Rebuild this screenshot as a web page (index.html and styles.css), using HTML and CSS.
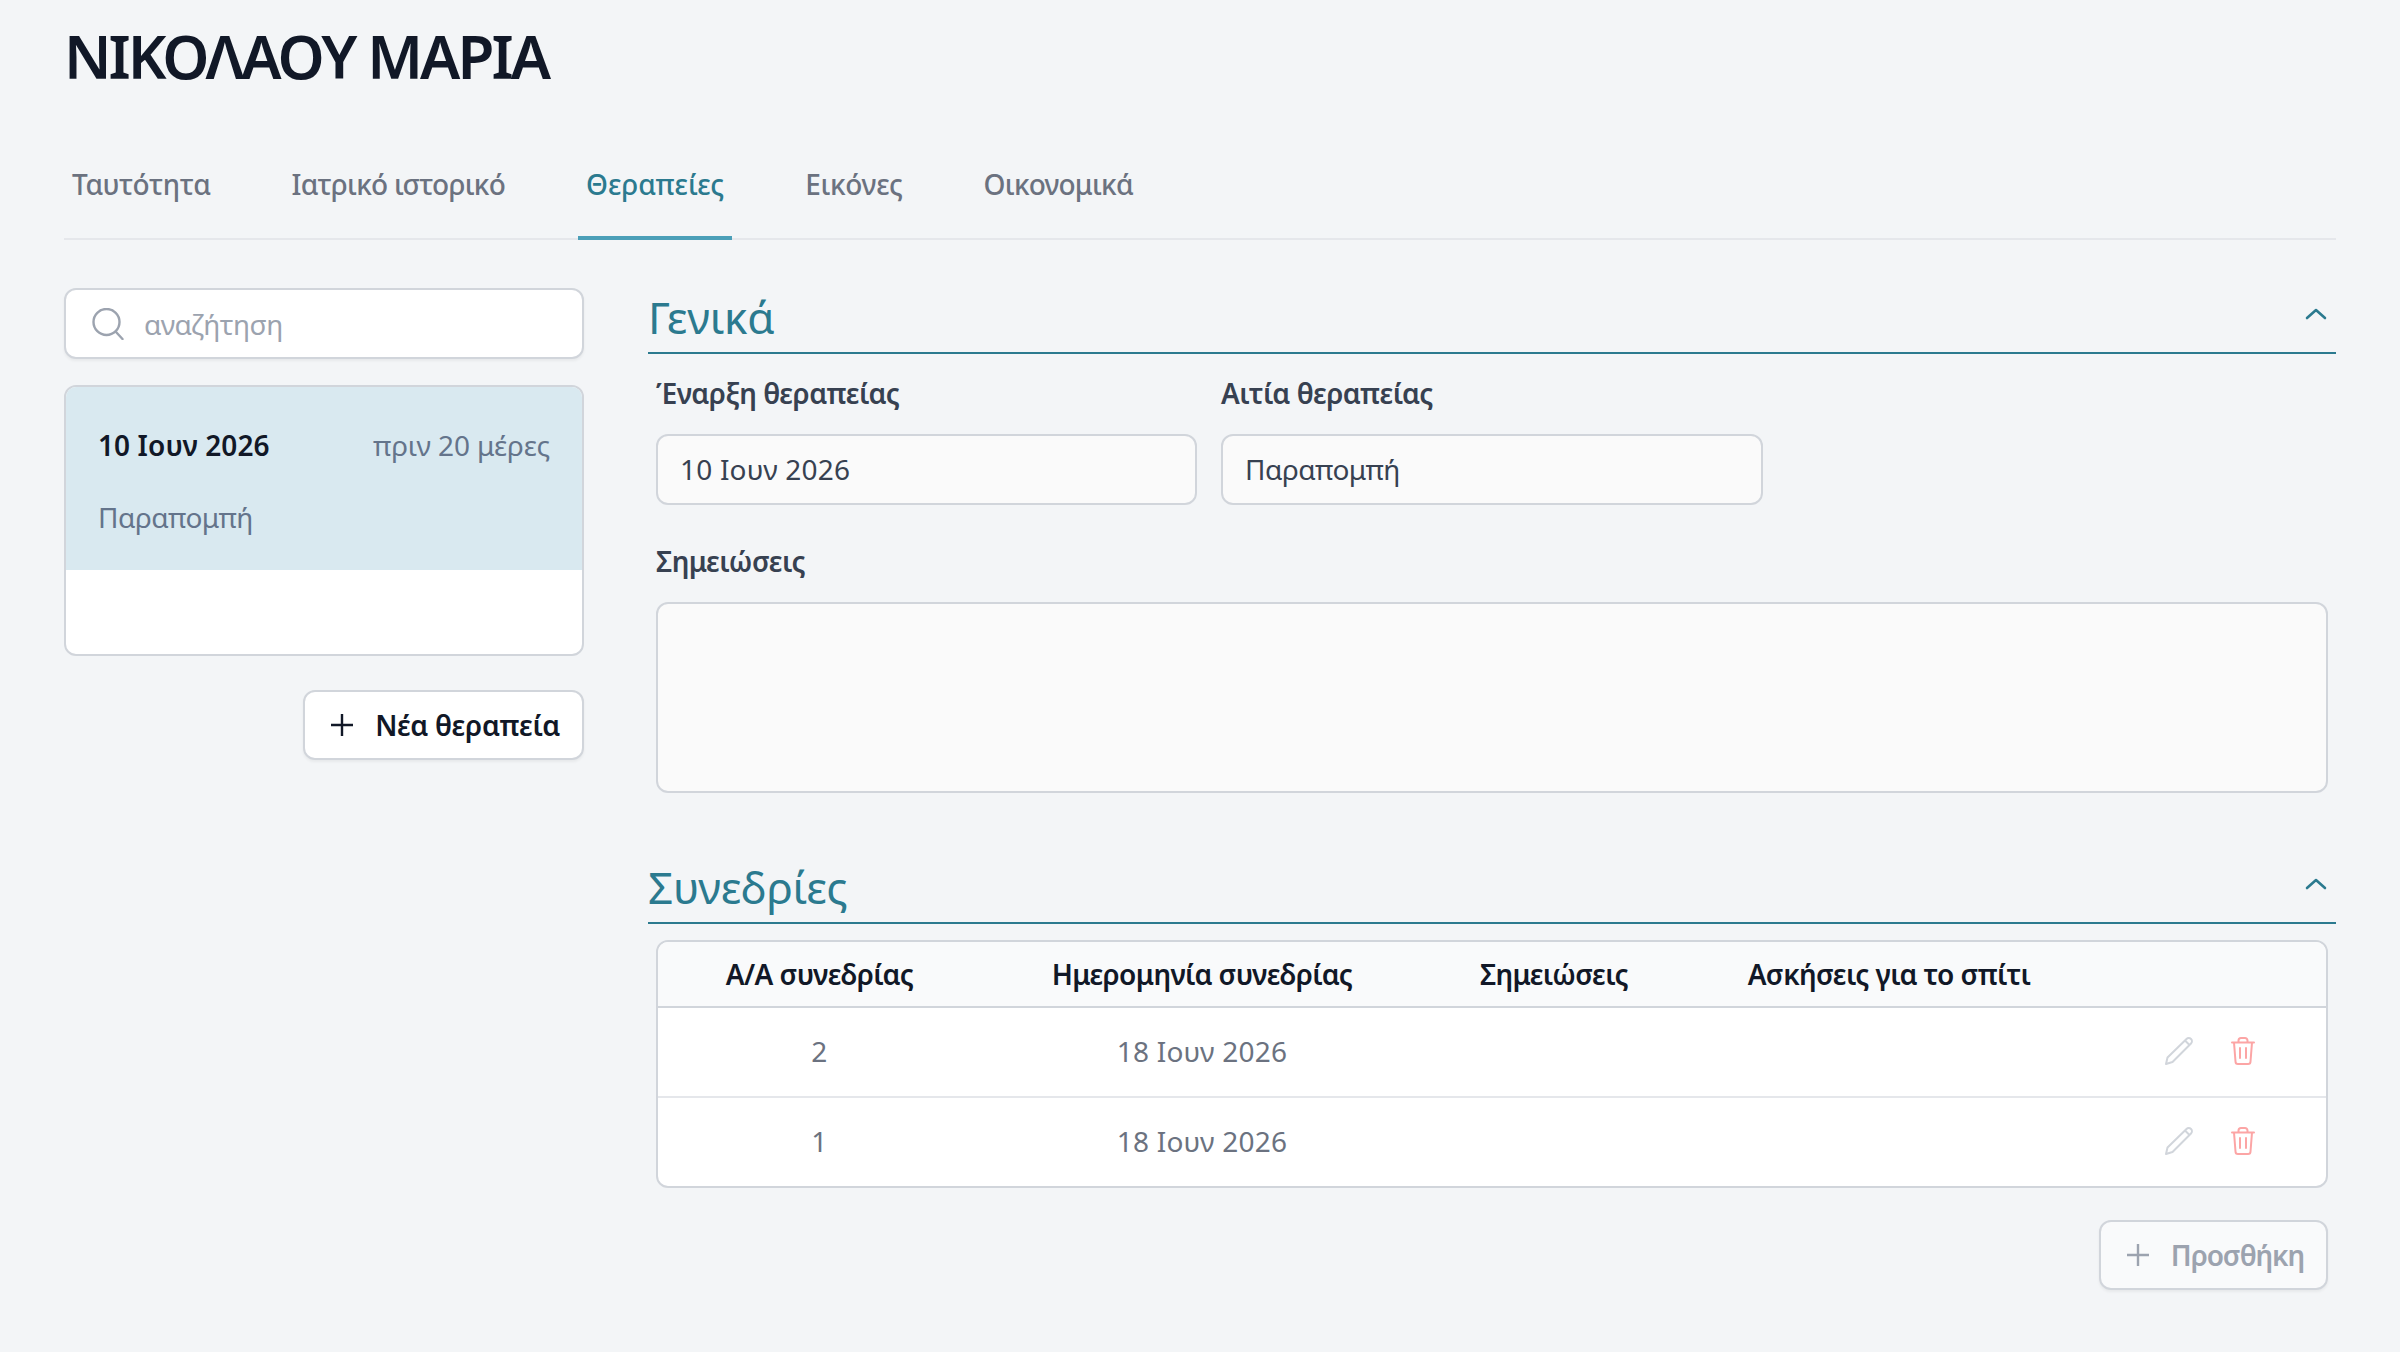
FILE: index.html
```html
<!DOCTYPE html>
<html lang="el">
<head>
<meta charset="utf-8">
<title>ΝΙΚΟΛΑΟΥ ΜΑΡΙΑ</title>
<link rel="stylesheet" href="styles.css">
</head>
<body>
<main class="page">
  <h1 class="title">ΝΙΚΟΛΑΟΥ ΜΑΡΙΑ</h1>
  <nav class="tabs">
    <a class="tab">Ταυτότητα</a>
    <a class="tab tight">Ιατρικό ιστορικό</a>
    <a class="tab active">Θεραπείες</a>
    <a class="tab">Εικόνες</a>
    <a class="tab tight">Οικονομικά</a>
  </nav>
  <div class="columns">
    <aside class="side">
      <div class="search">
        <svg class="search-icon" viewBox="0 0 32 32" fill="none" stroke="currentColor" stroke-width="2.4" stroke-linecap="round"><circle cx="14.500" cy="14" r="13"/><path d="M24 24l6.500 7"/></svg>
        <span class="search-text">αναζήτηση</span>
      </div>
      <div class="list">
        <div class="item">
          <div class="item-top"><strong class="item-date">10 Ιουν 2026</strong><span class="item-ago">πριν 20 μέρες</span></div>
          <div class="item-reason">Παραπομπή</div>
        </div>
      </div>
      <div class="side-actions">
        <button class="btn btn-dark">
          <svg class="plus" viewBox="0 0 24 24" fill="none" stroke="currentColor" stroke-width="2.4"><path d="M12 1v22M1 12h22"/></svg>
          Νέα θεραπεία
        </button>
      </div>
    </aside>
    <section class="content">
      <header class="sec-head">
        <h2 class="sec-title">Γενικά</h2>
        <svg class="chev" viewBox="0 0 22 12" fill="none" stroke="currentColor" stroke-width="2.600" stroke-linecap="round" stroke-linejoin="round"><path d="M2 10l9-8 9 8"/></svg>
      </header>
      <div class="form">
        <div class="form-row">
          <label class="field">
            <span class="label">Έναρξη θεραπείας</span>
            <input class="input date" value="10 Ιουν 2026" readonly>
          </label>
          <label class="field">
            <span class="label">Αιτία θεραπείας</span>
            <input class="input" value="Παραπομπή" readonly>
          </label>
        </div>
        <label class="field notes">
          <span class="label">Σημειώσεις</span>
          <textarea class="input area" readonly></textarea>
        </label>
      </div>

      <header class="sec-head second">
        <h2 class="sec-title">Συνεδρίες</h2>
        <svg class="chev" viewBox="0 0 22 12" fill="none" stroke="currentColor" stroke-width="2.600" stroke-linecap="round" stroke-linejoin="round"><path d="M2 10l9-8 9 8"/></svg>
      </header>
      <div class="table-wrap">
        <table class="table">
          <colgroup><col class="c1"><col class="c2"><col class="c3"><col class="c4"><col class="c5"></colgroup>
          <thead>
            <tr><th>Α/Α συνεδρίας</th><th>Ημερομηνία συνεδρίας</th><th>Σημειώσεις</th><th>Ασκήσεις για το σπίτι</th><th></th></tr>
          </thead>
          <tbody>
            <tr>
              <td>2</td><td>18 Ιουν 2026</td><td></td><td></td>
              <td><div class="actions">
                <svg class="ico-edit" viewBox="0 0 28 28" fill="none" stroke="currentColor" stroke-width="2" stroke-linejoin="round"><path d="M1 27l1.500-6.500L21.500 2a2.800 2.800 0 0 1 4.500 4.500L7.500 25z"/><path d="M20 3.500l4.500 4.500"/></svg>
                <svg class="ico-del" viewBox="0 0 24 28" fill="none" stroke="currentColor" stroke-width="2" stroke-linecap="round" stroke-linejoin="round"><path d="M1 5.500h22M7.500 5.500V3.500a2.500 2.500 0 0 1 2.500-2.500h4a2.500 2.500 0 0 1 2.500 2.500v2M3 5.500l1.500 19a2.500 2.500 0 0 0 2.500 2.500h10a2.500 2.500 0 0 0 2.500-2.500l1.500-19M9 11v10M15 11v10"/></svg>
              </div></td>
            </tr>
            <tr>
              <td>1</td><td>18 Ιουν 2026</td><td></td><td></td>
              <td><div class="actions">
                <svg class="ico-edit" viewBox="0 0 28 28" fill="none" stroke="currentColor" stroke-width="2" stroke-linejoin="round"><path d="M1 27l1.500-6.500L21.500 2a2.800 2.800 0 0 1 4.500 4.500L7.500 25z"/><path d="M20 3.500l4.500 4.500"/></svg>
                <svg class="ico-del" viewBox="0 0 24 28" fill="none" stroke="currentColor" stroke-width="2" stroke-linecap="round" stroke-linejoin="round"><path d="M1 5.500h22M7.500 5.500V3.500a2.500 2.500 0 0 1 2.500-2.500h4a2.500 2.500 0 0 1 2.500 2.500v2M3 5.500l1.500 19a2.500 2.500 0 0 0 2.500 2.500h10a2.500 2.500 0 0 0 2.500-2.500l1.500-19M9 11v10M15 11v10"/></svg>
              </div></td>
            </tr>
          </tbody>
        </table>
      </div>
      <div class="content-actions">
        <button class="btn btn-muted">
          <svg class="plus" viewBox="0 0 24 24" fill="none" stroke="currentColor" stroke-width="2.400"><path d="M12 1v22M1 12h22"/></svg>
          Προσθήκη
        </button>
      </div>
    </section>
  </div>
</main>
</body>
</html>
```
FILE: styles.css
```css
* { box-sizing: border-box; }
html, body { margin: 0; height: 100%; }
body {
  background: #f3f5f7;
  font-family: "Noto Sans", "Open Sans", sans-serif;
  color: #111827;
  overflow: hidden;
}
.page { padding: 17px 64px 0; }
.title {
  margin: 0;
  font-size: 60px;
  line-height: 78px;
  font-weight: 600;
  color: #111827;
  letter-spacing: -2.900px;
}
.tabs {
  display: flex;
  margin-top: 51px;
  height: 94px;
  border-bottom: 2px solid #e5e7eb;
  gap: 65px;
}
.tab {
  font-size: 28px;
  line-height: 40px;
  font-weight: 500;
  letter-spacing: -0.300px;
  color: #6b7280;
  padding: 18px 8px 0;
  height: 94px;
  white-space: nowrap;
}
.tab.tight { letter-spacing: -0.750px; }
.tab.active {
  color: #2b7a8f;
  letter-spacing: -0.050px;
  border-bottom: 4px solid #4b9fb8;
}
.columns {
  display: grid;
  grid-template-columns: 520px 1fr;
  column-gap: 64px;
  margin-top: 48px;
}
.search {
  height: 71px;
  background: #fff;
  border: 2px solid #d1d5db;
  border-radius: 12px;
  box-shadow: 0 2px 3px rgba(0,0,0,.05);
  display: flex;
  align-items: center;
  padding-left: 26px;
  gap: 20px;
}
.search-icon { width: 32px; height: 32px; color: #9ca3af; }
.search-text { font-size: 28px; color: #9ca3af; letter-spacing: -0.500px; }
.list {
  margin-top: 26px;
  height: 271px;
  background: #fff;
  border: 2px solid #d1d5db;
  border-radius: 12px;
  overflow: hidden;
}
.item { background: #d9e9f0; height: 183px; padding: 38px 32px 0; }
.item-top { display: flex; justify-content: space-between; align-items: center; height: 40px; }
.item-date { font-size: 28px; font-weight: 600; color: #111827; letter-spacing: 0.100px; }
.item-ago { font-size: 28px; color: #64748b; letter-spacing: -0.100px; }
.item-reason { font-size: 28px; color: #64748b; margin-top: 32px; line-height: 40px; letter-spacing: -0.500px; }
.side-actions, .content-actions { display: flex; justify-content: flex-end; }
.side-actions { margin-top: 34px; }
.content-actions { margin: 32px 8px 0 0; }
.btn {
  height: 70px;
  display: flex;
  align-items: center;
  gap: 21px;
  padding: 0 22px 0 25px;
  border: 2px solid #d1d5db;
  border-radius: 12px;
  font: 600 28px "Noto Sans", sans-serif;
  letter-spacing: -0.250px;
  box-shadow: 0 2px 3px rgba(0,0,0,.05);
}
.btn-dark { background: #fff; color: #111827; }
.btn-muted { background: #f9fafb; color: #9ca3af; letter-spacing: -1.100px; }
.plus { width: 24px; height: 24px; flex: none; }
.sec-head {
  height: 66px;
  padding-bottom: 6px;
  border-bottom: 2px solid #2b7a8f;
  display: flex;
  align-items: center;
  justify-content: space-between;
  color: #2b7a8f;
}
.sec-title { margin: 0; font-size: 44px; line-height: 60px; font-weight: 400; color: #2b7a8f; letter-spacing: -0.200px; }
.chev { width: 22px; height: 12px; margin: -6px 9px 0 0; color: #2b7a8f; }
.second { margin-top: 65px; }
.form { padding: 19px 8px 0; }
.form-row { display: grid; grid-template-columns: 541px 542px; column-gap: 24px; }
.field { display: block; }
.label { display: block; font-size: 28px; line-height: 40px; font-weight: 600; letter-spacing: -0.500px; color: #374151; margin-bottom: 21px; }
.input {
  display: block;
  width: 100%;
  height: 71px;
  background: #fafafa;
  border: 2px solid #d1d5db;
  border-radius: 12px;
  padding: 0 22px 2px;
  font: 400 28px "Noto Sans", sans-serif;
  letter-spacing: -0.500px;
  color: #374151;
  outline: none;
}
.date { letter-spacing: 0.200px; }
.notes { margin-top: 36px; }
.area { height: 191px; resize: none; }
.table-wrap {
  margin: 16px 8px 0;
  background: #fff;
  border: 2px solid #d1d5db;
  border-radius: 12px;
  overflow: hidden;
}
.table { width: 100%; border-collapse: collapse; table-layout: fixed; }
.c1 { width: 323px; }
.c2 { width: 442px; }
.c3 { width: 262px; }
.c4 { width: 408px; }
.table th {
  height: 65px;
  font-size: 28px;
  font-weight: 600;
  letter-spacing: -0.600px;
  color: #111827;
  background: #f9fafb;
  border-bottom: 2px solid #d1d5db;
  padding: 0;
  white-space: nowrap;
}
.table td {
  height: 90px;
  font-size: 28px;
  letter-spacing: 0.250px;
  color: #6b7280;
  text-align: center;
  padding: 0 0 2px;
  border-top: 2px solid #e5e7eb;
}
.table tbody tr:first-child td { border-top: 0; }
.table tbody tr:last-child td { height: 89px; }
.actions { display: flex; justify-content: flex-end; align-items: center; gap: 38px; padding-right: 71px; }
.ico-edit { width: 28px; height: 28px; color: #d1d5db; }
.ico-del { width: 24px; height: 28px; color: #fca5a5; }
```
